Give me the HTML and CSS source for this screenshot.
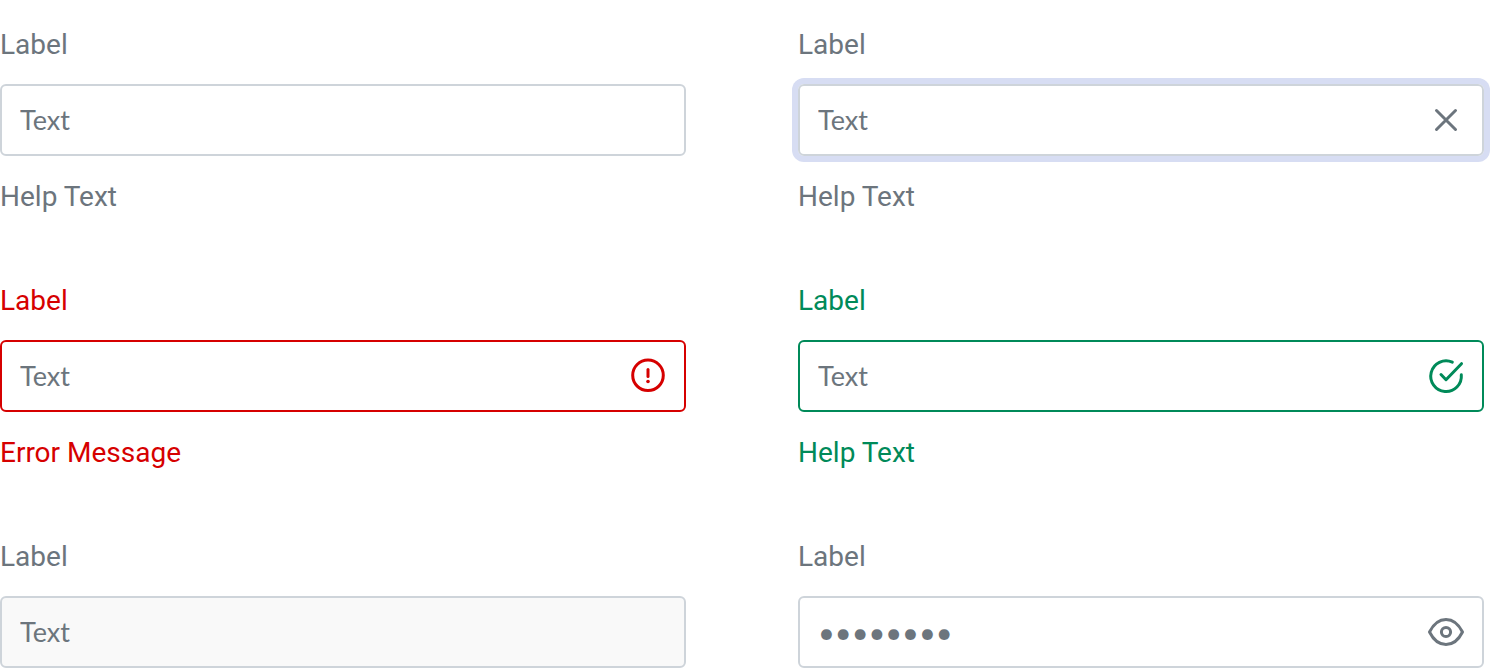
FILE: index.html
```html
<!DOCTYPE html>
<html lang="en">
<head>
<meta charset="UTF-8">
<title>Text inputs</title>
<link rel="stylesheet" href="styles.css">
</head>
<body>
<form class="form">
  <div class="field">
    <label for="default">Label</label>
    <div class="control">
      <input id="default" type="text" placeholder="Text" aria-describedby="defaultHelp">
    </div>
    <p id="defaultHelp" class="help">Help Text</p>
  </div>

  <div class="field active">
    <label for="active">Label</label>
    <div class="control">
      <input id="active" type="text" value="Text" aria-describedby="activeHelp">
      <button type="button" class="icon" aria-label="Clear">
        <svg viewBox="0 0 40 40"><path d="M10.5 10.5l19 19M29.5 10.5l-19 19"/></svg>
      </button>
    </div>
    <p id="activeHelp" class="help">Help Text</p>
  </div>

  <div class="field error">
    <label for="error">Label</label>
    <div class="control">
      <input id="error" type="text" value="Text" aria-invalid="true" aria-describedby="errorHelp">
      <svg class="icon" viewBox="0 0 40 40"><circle cx="20" cy="19.3" r="15.3"/><path d="M20 13.5v7"/><circle class="dot" cx="20" cy="25.5" r="1.8"/></svg>
    </div>
    <p id="errorHelp" class="help">Error Message</p>
  </div>

  <div class="field success">
    <label for="success">Label</label>
    <div class="control">
      <input id="success" type="text" value="Text" aria-describedby="successHelp">
      <svg class="icon" viewBox="0 0 40 40"><path d="M26.3 6.2A15.3 15.3 0 1 0 35.3 18.8M15 18.5l5 5.2L35.5 7.7"/></svg>
    </div>
    <p id="successHelp" class="help">Help Text</p>
  </div>

  <div class="field disabled">
    <label for="disabled">Label</label>
    <div class="control">
      <input id="disabled" type="text" value="Text" disabled>
    </div>
  </div>

  <div class="field">
    <label for="password">Label</label>
    <div class="control">
      <input id="password" type="password" value="password">
      <button type="button" class="icon" aria-label="Show password">
        <svg viewBox="0 0 40 40"><path d="M3.5 20C7.5 12 13.5 7.5 20 7.5S32.5 12 36.5 20C32.5 28 26.500 32.5 20 32.5S7.5 28 3.5 20z"/><circle cx="20" cy="20" r="4.6"/></svg>
      </button>
    </div>
  </div>
</form>
</body>
</html>
```

FILE: styles.css
```css
:root {
  --text-color: #6c757d;
  --border-color: #ced4da;
  --focus-color: #d7ddf3;
  --error-color: #d60000;
  --success-color: #008a59;
}

* {
  box-sizing: border-box;
}
body {
  margin: 0;
  font-family: Roboto, sans-serif;
  font-size: 28px;
  line-height: 40px;
  color: var(--text-color);
  background-color: #fff;
}
.form {
  display: grid;
  grid-template-columns: 1fr 1fr;
  gap: 64px 112px;
  padding: 25px 6px 0 0;
}
.field {
  display: flex;
  flex-direction: column;
}
.control {
  display: flex;
  align-items: center;
  height: 72px;
  margin-top: 19px;
  padding: 0 16px 0 18px;
  border: 2px solid var(--border-color);
  border-radius: 6px;
}
input {
  flex: 1;
  min-width: 0;
  padding: 0;
  border: 0;
  outline: 0;
  background: none;
  font-family: Lato, sans-serif;
  font-size: 27px;
  line-height: 40px;
  color: var(--text-color);
}
input[type="password"] {
  font-size: 29px;
}
input::placeholder {
  color: var(--text-color);
  opacity: 1;
}
.help {
  margin: 21px 0 0;
}
.icon {
  width: 40px;
  height: 40px;
  padding: 0;
  border: 0;
  background: none;
  color: inherit;
}
svg {
  display: block;
  width: 40px;
  height: 40px;
  fill: none;
  stroke: currentColor;
  stroke-width: 3;
  stroke-linecap: round;
  stroke-linejoin: round;
}
.dot {
  fill: currentColor;
  stroke: none;
}
.active .control {
  box-shadow: 0 0 0 6px var(--focus-color);
}
.error {
  color: var(--error-color);
}
.error .control {
  border-color: var(--error-color);
}
.success {
  color: var(--success-color);
}
.success .control {
  border-color: var(--success-color);
}
.disabled .control {
  background-color: #f9f9f9;
}
```
